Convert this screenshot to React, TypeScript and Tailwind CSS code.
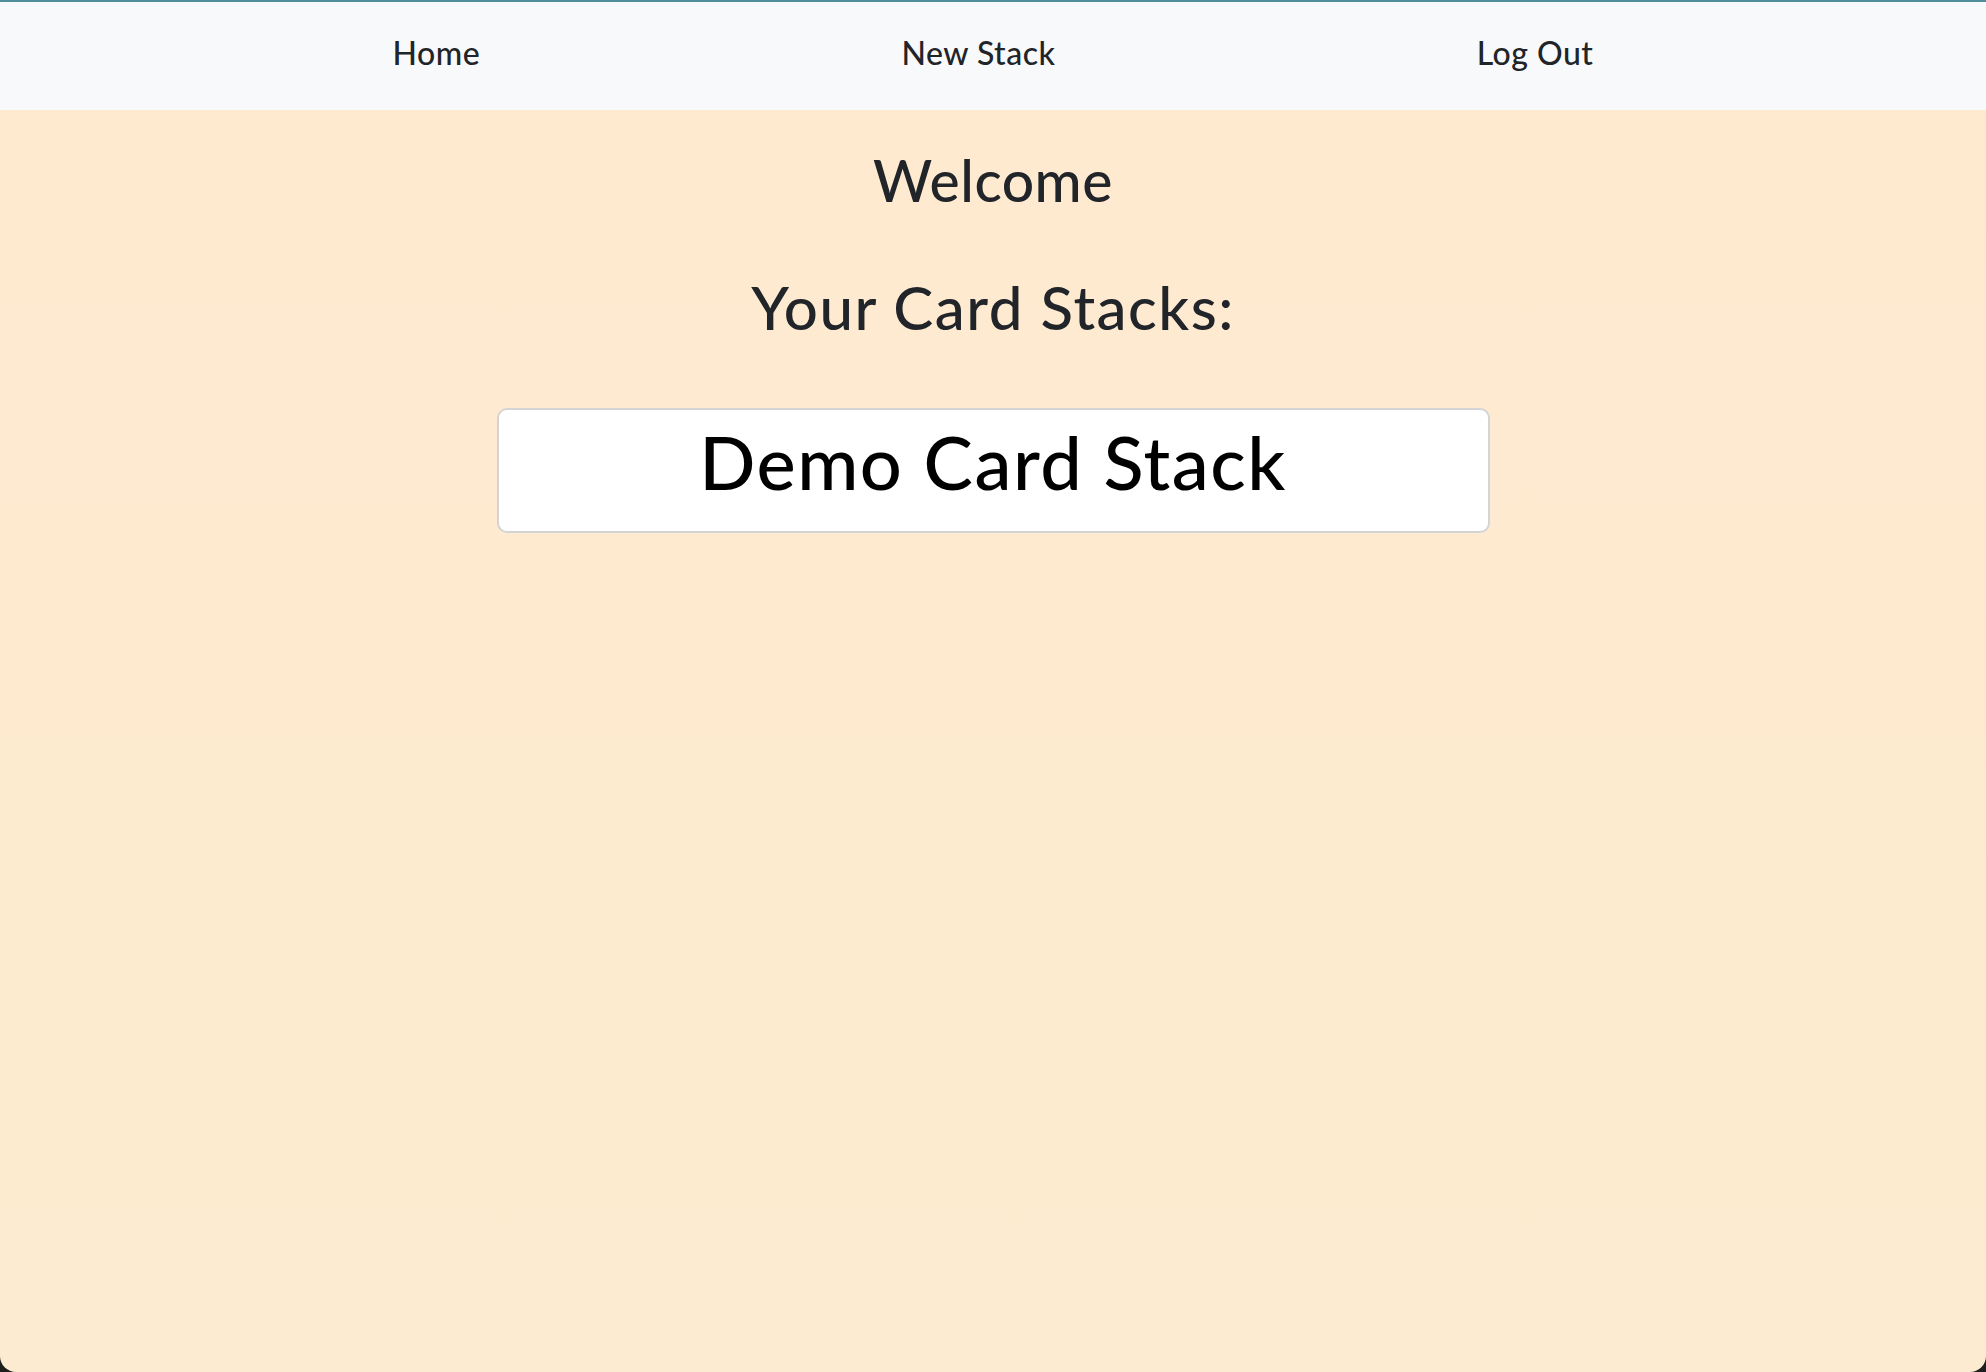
const stacks = ["Demo Card Stack"];

function Nav() {
  return (
    <nav className="flex h-[110px] items-center justify-around border-t-2 border-[#4e8f9b] bg-[#f8f9fa] px-[182px] pb-[5px]">
      {["Home", "New Stack", "Log Out"].map((item) => (
        <a
          key={item}
          href="#"
          className="text-[32px] font-medium leading-[1.2] tracking-[0.5px] text-[#212529]"
        >
          {item}
        </a>
      ))}
    </nav>
  );
}

export default function App() {
  return (
    <div className="h-screen overflow-hidden bg-[#1e1e1e] font-['Lato',sans-serif]">
      <div className="flex h-full flex-col overflow-hidden rounded-b-[16px] bg-gradient-to-b from-[#ffead0] to-[#fcebd0]">
        <Nav />
        <main className="flex flex-col items-center">
          <h1 className="mt-[36px] text-[57px] font-medium leading-[1.2] tracking-[0.5px] text-[#212529]">
            Welcome
          </h1>
          <h2 className="mt-[57px] text-[60px] font-medium leading-[1.2] tracking-[1.5px] text-[#212529]">
            Your Card Stacks:
          </h2>
          <div className="mt-[65px] flex w-1/2 flex-col gap-4">
            {stacks.map((stack) => (
              <div
                key={stack}
                className="rounded-[10px] border-2 border-[#d4d4d4] bg-white pt-[8px] pb-[24px] text-center text-[74px] font-medium leading-[1.2] tracking-[1.5px] text-black"
              >
                {stack}
              </div>
            ))}
          </div>
        </main>
      </div>
    </div>
  );
}
